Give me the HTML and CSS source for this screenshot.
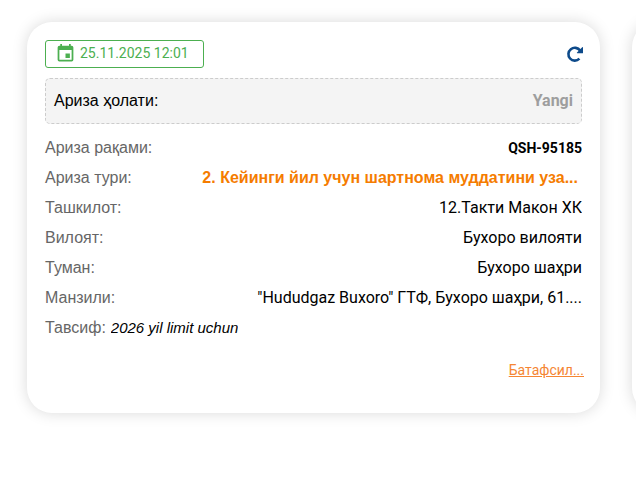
FILE: index.html
```html
<!DOCTYPE html>
<html lang="uz">
<head>
<meta charset="utf-8">
<meta name="viewport" content="width=device-width, initial-scale=1">
<title>Аризалар</title>
<link rel="stylesheet" href="styles.css">
</head>
<body>
<main class="cards">
  <article class="card">
    <header class="card-head">
      <time class="date" datetime="2025-11-25T12:01">
        <svg class="date-icon" viewBox="0 0 24 24" aria-hidden="true"><path d="M19 3h-1V1h-2v2H8V1H6v2H5a2 2 0 0 0-2 2v14a2 2 0 0 0 2 2h14a2 2 0 0 0 2-2V5a2 2 0 0 0-2-2zm0 16H5V8h14zM17 12h-5v5h5z"/></svg>
        25.11.2025 12:01
      </time>
      <button class="refresh" type="button" aria-label="Янгилаш">
        <svg class="refresh-icon" viewBox="0 0 16 16" aria-hidden="true"><path class="arc" d="M12.4 12.7A6.4 6.4 0 1 1 13.1 4.6"/><path class="head" d="M15.2 1.3q.8-.7.8.3v5.1q0 .6-.6.6h-5q-1 0-.4-.8z"/></svg>
      </button>
    </header>
    <div class="status">
      <span>Ариза ҳолати:</span>
      <strong class="status-value">Yangi</strong>
    </div>
    <dl class="details">
      <div class="row"><dt>Ариза рақами:</dt><dd class="number">QSH-95185</dd></div>
      <div class="row"><dt>Ариза тури:</dt><dd class="kind">2. Кейинги йил учун шартнома муддатини уза...</dd></div>
      <div class="row"><dt>Ташкилот:</dt><dd>12.Такти Макон ХК</dd></div>
      <div class="row"><dt>Вилоят:</dt><dd>Бухоро вилояти</dd></div>
      <div class="row"><dt>Туман:</dt><dd>Бухоро шаҳри</dd></div>
      <div class="row"><dt>Манзили:</dt><dd>"Hududgaz Buxoro" ГТФ, Бухоро шаҳри, 61....</dd></div>
      <div class="row note"><dt>Тавсиф:</dt><dd>2026 yil limit uchun</dd></div>
    </dl>
    <footer class="card-foot"><a class="more" href="#">Батафсил...</a></footer>
  </article>
  <article class="card"></article>
</main>
</body>
</html>
```

FILE: styles.css
```css
* {
  box-sizing: border-box;
}

body {
  margin: 0;
  background: #fff;
  color: #000;
  font: 16px/30px Roboto, "Liberation Sans", sans-serif;
}

.cards {
  display: flex;
  gap: 32px;
  padding: 22px 36px 32px 27px;
  overflow: hidden;
}

.card {
  flex: 0 0 100%;
  padding: 18px 16px 18px 18px;
  border-radius: 25px;
  background: #fff;
  box-shadow: 0 0 15px rgba(0, 0, 0, 0.15);
}

.card-head {
  display: flex;
  align-items: center;
  justify-content: space-between;
}

.date {
  display: flex;
  align-items: center;
  gap: 4px;
  height: 28px;
  padding: 0 14px 2px 9px;
  border: 1px solid #4caf50;
  border-radius: 3px;
  color: #4caf50;
  font-size: 14px;
}

.date-icon {
  width: 21px;
  height: 21px;
  fill: #4caf50;
}

.refresh {
  display: flex;
  margin-right: 1px;
  padding: 0;
  border: 0;
  background: none;
}

.refresh-icon {
  width: 16px;
  height: 16px;
  overflow: visible;
}

.refresh-icon .arc {
  fill: none;
  stroke: #0d4a8a;
  stroke-width: 2.6;
}

.refresh-icon .head {
  fill: #0d4a8a;
}

.status {
  display: flex;
  justify-content: space-between;
  margin: 10px 2px 0 0;
  padding: 7px 8px;
  border: 1px dashed #ccc;
  border-radius: 5px;
  background: #f4f4f4;
  font-family: "Liberation Sans", sans-serif;
}

.status-value {
  color: #9e9e9e;
  font-family: Roboto, sans-serif;
}

.details {
  margin: 9px 2px 0 0;
}

.row {
  display: flex;
  justify-content: space-between;
  gap: 5px;
}

.row dt {
  color: #666;
  font-family: "Liberation Sans", sans-serif;
  white-space: nowrap;
}

.row dd {
  margin: 0;
  overflow: hidden;
  text-overflow: ellipsis;
  white-space: nowrap;
}

.row .number {
  font-size: 14px;
  font-weight: 700;
}

.row .kind {
  padding-right: 4px;
  color: #f57c00;
  font-family: "Liberation Sans", sans-serif;
  font-weight: 700;
}

.note {
  justify-content: flex-start;
}

.note dd {
  font-family: "Liberation Sans", sans-serif;
  font-size: 15px;
  font-style: italic;
}

.card-foot {
  margin-top: 12px;
  padding-bottom: 10px;
  text-align: right;
}

.more {
  color: #f58634;
  font-size: 14px;
}
```
